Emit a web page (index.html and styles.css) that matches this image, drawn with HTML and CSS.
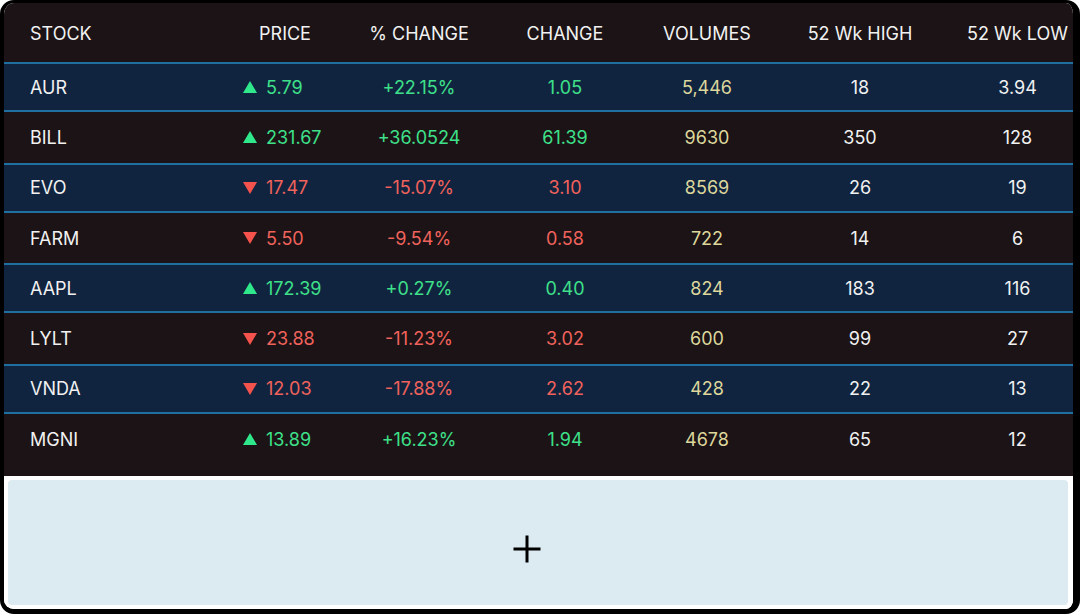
FILE: index.html
```html
<!DOCTYPE html>
<html>
<head>
<meta charset="utf-8">
<link rel="stylesheet" href="styles.css">
</head>
<body>
<div class="frame">
  <div class="table">
    <div class="row head">
      <div class="cell name">STOCK</div>
      <div class="cell">PRICE</div>
      <div class="cell">% CHANGE</div>
      <div class="cell">CHANGE</div>
      <div class="cell">VOLUMES</div>
      <div class="cell">52 Wk HIGH</div>
      <div class="cell last">52 Wk LOW</div>
    </div>
    <div class="row navy">
      <div class="cell name">AUR</div>
      <div class="cell price up"><span class="tri up-tri"></span>5.79</div>
      <div class="cell up">+22.15%</div>
      <div class="cell up">1.05</div>
      <div class="cell vol">5,446</div>
      <div class="cell">18</div>
      <div class="cell last">3.94</div>
    </div>
    <div class="row dark">
      <div class="cell name">BILL</div>
      <div class="cell price up"><span class="tri up-tri"></span>231.67</div>
      <div class="cell up">+36.0524</div>
      <div class="cell up">61.39</div>
      <div class="cell vol">9630</div>
      <div class="cell">350</div>
      <div class="cell last">128</div>
    </div>
    <div class="row navy">
      <div class="cell name">EVO</div>
      <div class="cell price down"><span class="tri down-tri"></span>17.47</div>
      <div class="cell down">-15.07%</div>
      <div class="cell down">3.10</div>
      <div class="cell vol">8569</div>
      <div class="cell">26</div>
      <div class="cell last">19</div>
    </div>
    <div class="row dark">
      <div class="cell name">FARM</div>
      <div class="cell price down"><span class="tri down-tri"></span>5.50</div>
      <div class="cell down">-9.54%</div>
      <div class="cell down">0.58</div>
      <div class="cell vol">722</div>
      <div class="cell">14</div>
      <div class="cell last">6</div>
    </div>
    <div class="row navy">
      <div class="cell name">AAPL</div>
      <div class="cell price up"><span class="tri up-tri"></span>172.39</div>
      <div class="cell up">+0.27%</div>
      <div class="cell up">0.40</div>
      <div class="cell vol">824</div>
      <div class="cell">183</div>
      <div class="cell last">116</div>
    </div>
    <div class="row dark">
      <div class="cell name">LYLT</div>
      <div class="cell price down"><span class="tri down-tri"></span>23.88</div>
      <div class="cell down">-11.23%</div>
      <div class="cell down">3.02</div>
      <div class="cell vol">600</div>
      <div class="cell">99</div>
      <div class="cell last">27</div>
    </div>
    <div class="row navy">
      <div class="cell name">VNDA</div>
      <div class="cell price down"><span class="tri down-tri"></span>12.03</div>
      <div class="cell down">-17.88%</div>
      <div class="cell down">2.62</div>
      <div class="cell vol">428</div>
      <div class="cell">22</div>
      <div class="cell last">13</div>
    </div>
    <div class="row dark">
      <div class="cell name">MGNI</div>
      <div class="cell price up"><span class="tri up-tri"></span>13.89</div>
      <div class="cell up">+16.23%</div>
      <div class="cell up">1.94</div>
      <div class="cell vol">4678</div>
      <div class="cell">65</div>
      <div class="cell last">12</div>
    </div>
  </div>
  <div class="add">
    <div class="add-panel">
      <svg class="plus" width="30" height="30" viewBox="0 0 30 30"><path d="M15 1.5V28.5M1.5 15H28.5" stroke="#000" stroke-width="3" fill="none"/></svg>
    </div>
  </div>
</div>
</body>
</html>
```

FILE: styles.css
```css
* { box-sizing: border-box; }
html, body { margin: 0; padding: 0; background: #ffffff; }
body { width: 1080px; height: 614px; overflow: hidden; }

.frame {
  width: 1080px;
  height: 614px;
  border-style: solid;
  border-color: #000;
  border-width: 3px 7px 5px 4px;
  border-radius: 14px;
  background: #ffffff;
  overflow: hidden;
  display: flex;
  flex-direction: column;
  font-family: "Inter", "Noto Sans", sans-serif;
  font-size: 18px;
  color: #f1f1f1;
}

.table {
  background: #1b1315;
  padding-bottom: 12px;
  flex: none;
}

.row {
  display: grid;
  grid-template-columns: 214px 134px 134px 158px 126px 180px 1fr;
  align-items: center;
  height: 50.3px;
}
.row.head { height: 59px; padding-top: 2px; }
.row.navy {
  background: #10243f;
  border-top: 2px solid #1f70a0;
  border-bottom: 2px solid #1f70a0;
}

.cell { text-align: center; white-space: nowrap; }
.cell.name { text-align: left; padding-left: 26px; }
.cell.last { padding-left: 12px; }
.cell.price { text-align: left; padding-left: 25px; display: flex; align-items: center; }

.up { color: #3ee08a; }
.down { color: #f0625c; }
.vol { color: #ddd79c; }

.tri { display: inline-block; width: 0; height: 0; margin-right: 9px; }
.up-tri {
  border-left: 7px solid transparent;
  border-right: 7px solid transparent;
  border-bottom: 12px solid #2fe88b;
}
.down-tri {
  border-left: 7px solid transparent;
  border-right: 7px solid transparent;
  border-top: 12px solid #f4524c;
}

.add {
  flex: 1;
  padding: 4px 5px 4px 4px;
  background: #ffffff;
  display: flex;
}
.add-panel {
  flex: 1;
  background: #dbebf1;
  border-radius: 4px;
  display: flex;
  align-items: center;
  justify-content: center;
  padding-top: 12px;
}
.plus { display: block; margin-right: 22px; }
```
